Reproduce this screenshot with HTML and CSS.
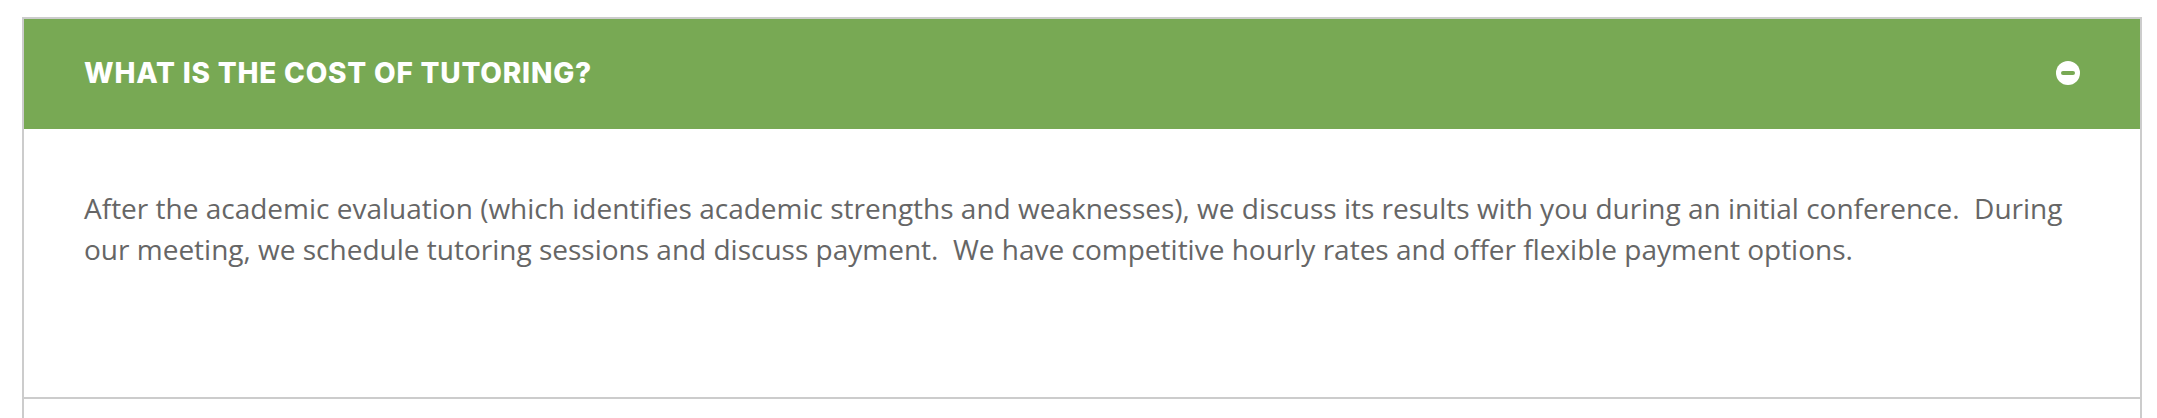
FILE: index.html
```html
<!DOCTYPE html>
<html lang="en">
<head>
<meta charset="utf-8">
<title>FAQ</title>
<link rel="stylesheet" href="styles.css">
</head>
<body>
<div class="page">
  <div class="accordion">
    <div class="item open">
      <div class="item-header">
        <h3 class="item-title">WHAT IS THE COST OF TUTORING?</h3>
        <span class="toggle" aria-hidden="true">
          <svg width="24" height="24" viewBox="0 0 24 24"><circle cx="12" cy="12" r="12" fill="#fff"/><rect x="5" y="10" width="14" height="4" rx="2" fill="#78a954"/></svg>
        </span>
      </div>
      <div class="item-body">
        <p>After the academic evaluation (which identifies academic strengths and weaknesses), we discuss its results with you during an initial conference.&nbsp; During our meeting, we schedule tutoring sessions and discuss payment.&nbsp; We have competitive hourly rates and offer flexible payment options.</p>
      </div>
    </div>
    <div class="item">
      <div class="item-header closed"></div>
    </div>
  </div>
</div>
</body>
</html>
```

FILE: styles.css
```css
html, body {
  margin: 0;
  padding: 0;
  background: #fff;
}

.page {
  padding: 17px 15px 0 22px;
}

.accordion {
  border-left: 2px solid #cccccc;
  border-right: 2px solid #cccccc;
}

.item {
  border-top: 2px solid #cccccc;
}

.item-header {
  display: flex;
  align-items: center;
  justify-content: space-between;
  height: 110px;
  padding: 0 60px;
  background: #78a954;
}

.item-header.closed {
  background: #fff;
}

.item-title {
  margin: 0;
  font-family: Inter, "Open Sans", sans-serif;
  font-weight: 800;
  font-size: 28px;
  letter-spacing: 0.8px;
  color: #fff;
  line-height: 1;
  position: relative;
  top: -1px;
}

.toggle {
  display: flex;
  width: 24px;
  height: 24px;
  position: relative;
  top: -1px;
}

.item-body {
  padding: 59px 60px 127px;
}

.item-body p {
  margin: 0;
  font-family: "Open Sans", sans-serif;
  font-size: 28px;
  line-height: 41px;
  color: #666666;
}
```
